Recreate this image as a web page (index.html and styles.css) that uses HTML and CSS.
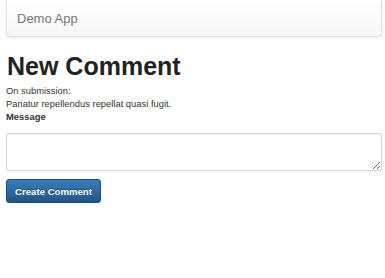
FILE: index.html
```html
<!DOCTYPE html>
<html>
<head>
<meta charset="utf-8">
<link rel="stylesheet" href="styles.css">
</head>
<body>
<div class="page">
  <nav class="navbar"><span class="brand">Demo App</span></nav>
  <h1 class="title">New Comment</h1>
  <p class="line">On submission:</p>
  <p class="line">Pariatur repellendus repellat quasi fugit.</p>
  <label class="line label" for="msg">Message</label>
  <textarea id="msg" class="field"></textarea>
  <button class="btn">Create Comment</button>
</div>
</body>
</html>
```
FILE: styles.css
```css
html, body {
  margin: 0;
  padding: 0;
  background: #fff;
}
body {
  font-family: "Liberation Sans", Arial, sans-serif;
  color: #333;
}
.page {
  display: flex;
  flex-direction: column;
  align-items: stretch;
  padding: 0 3px 0 6px;
}
.navbar {
  height: 36px;
  display: flex;
  align-items: center;
  padding-left: 10px;
  background: linear-gradient(to bottom, #ffffff 0%, #f6f6f6 100%);
  border: 1px solid #e2e2e2;
  border-top: 0;
  border-radius: 0 0 4px 4px;
  box-shadow: 0 1px 4px rgba(0,0,0,0.08);
}
.brand {
  font-size: 13px;
  color: #777;
  margin-top: 1px;
}
.title {
  margin: 14px 0 3px 1px;
  font-size: 25px;
  line-height: 30px;
  font-weight: bold;
  color: #222;
}
.line {
  margin: 0;
  font-size: 9.4px;
  line-height: 13px;
  color: #333;
}
.label {
  font-weight: bold;
  display: block;
}
.field {
  margin-top: 10px;
  height: 38px;
  box-sizing: border-box;
  border: 1px solid #d4d4d4;
  border-radius: 3px;
  box-shadow: inset 0 1px 1px rgba(0,0,0,0.06);
  background: #fff;
  font-family: inherit;
  resize: vertical;
}
.btn {
  align-self: flex-start;
  margin-top: 8px;
  width: 95px;
  height: 24px;
  padding: 0;
  font-family: inherit;
  font-size: 9.6px;
  font-weight: bold;
  color: #fff;
  text-shadow: 0 -1px 0 rgba(0,0,0,0.3);
  background: linear-gradient(to bottom, #3a7dbb 0%, #215488 100%);
  border: 1px solid #1f4e7e;
  border-radius: 3px;
  box-shadow: 0 1px 2px rgba(0,0,0,0.15);
}
```
